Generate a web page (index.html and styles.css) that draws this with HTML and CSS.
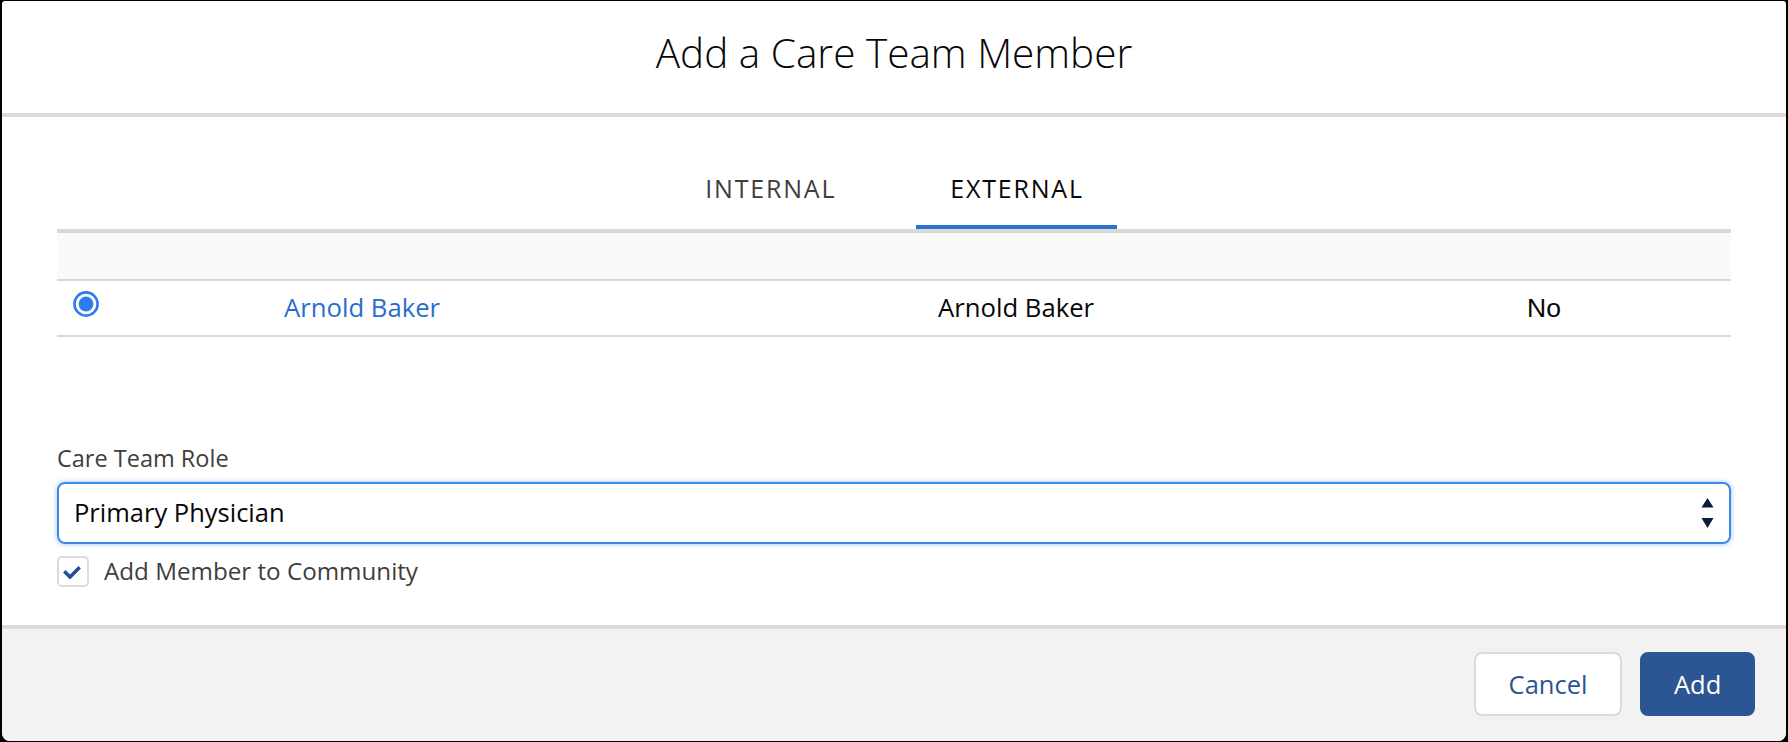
FILE: index.html
```html
<!DOCTYPE html>
<html lang="en">
<head>
<meta charset="utf-8">
<title>Add a Care Team Member</title>
<link rel="stylesheet" href="styles.css">
</head>
<body>
<div class="modal">
  <header class="modal-header">
    <h2 class="modal-title">Add a Care Team Member</h2>
  </header>
  <div class="modal-body">
    <nav class="tabs">
      <div class="tab">INTERNAL</div>
      <div class="tab tab-active">EXTERNAL</div>
    </nav>
    <div class="table">
      <div class="thead"></div>
      <div class="trow">
        <div class="cell cell-radio">
          <svg class="radio" width="26" height="26" viewBox="0 0 26 26">
            <circle cx="13" cy="13" r="11.6" fill="#fff" stroke="#2f7cf0" stroke-width="2.6"/>
            <circle cx="13" cy="13" r="7.4" fill="#2f7cf0"/>
          </svg>
        </div>
        <div class="cell"><a class="link">Arnold Baker</a></div>
        <div class="cell">Arnold Baker</div>
        <div class="cell cell-plain">No</div>
      </div>
    </div>
    <div class="field">
      <label class="field-label">Care Team Role</label>
      <div class="select">
        <span class="select-value">Primary Physician</span>
        <svg class="select-arrows" width="13" height="32" viewBox="0 0 13 32">
          <path d="M6.5 0 L12.5 9.5 L0.5 9.5 Z" fill="#0b1c3d"/>
          <path d="M0.5 20 L12.5 20 L6.5 30 Z" fill="#0b1c3d"/>
        </svg>
      </div>
      <div class="check-row">
        <span class="checkbox">
          <svg width="18" height="14" viewBox="0 0 18 14">
            <path d="M2.5 6.5 L7 11 L15.5 2.5" fill="none" stroke="#1c4f96" stroke-width="3.4" stroke-linecap="square"/>
          </svg>
        </span>
        <span class="check-label">Add Member to Community</span>
      </div>
    </div>
  </div>
  <footer class="modal-footer">
    <button class="btn btn-neutral">Cancel</button>
    <button class="btn btn-brand">Add</button>
  </footer>
</div>
</body>
</html>
```
FILE: styles.css
```css
* { box-sizing: border-box; }
html, body { margin: 0; padding: 0; }
body {
  background: #000;
  width: 1788px;
  height: 742px;
  padding: 1px 2px;
  font-family: "Open Sans", "Liberation Sans", sans-serif;
  color: #080707;
}
.modal {
  height: 740px;
  background: #fff;
  border-radius: 3px 3px 8px 8px;
  overflow: hidden;
  display: flex;
  flex-direction: column;
}
.modal-header {
  height: 116px;
  padding-top: 24px;
  border-bottom: 4px solid #dddbda;
  text-align: center;
}
.modal-title {
  margin: 0;
  font-size: 40.5px;
  line-height: 56px;
  font-weight: 300;
  letter-spacing: 0;
  color: #080707;
}
.modal-body {
  flex: 1;
  padding: 0 55px;
}
.tabs {
  display: flex;
  justify-content: center;
  gap: 47px;
}
.tab {
  padding: 51px 33px 17px 34px;
  line-height: 40px;
  font-size: 25px;
  letter-spacing: 1.8px;
  color: #3e3e3c;
  border-bottom: 4px solid transparent;
}
.tab-active {
  color: #080707;
  border-bottom-color: #2b73d3;
}
.table {
  border-top: 4px solid #d9d9d9;
}
.thead {
  height: 48px;
  background: #fafaf9;
  border-bottom: 2px solid #d9d9d9;
}
.trow {
  height: 56px;
  display: grid;
  grid-template-columns: 227px 654px 589px 1fr;
  align-items: center;
  border-bottom: 2px solid #d9d9d9;
  font-size: 25.7px;
}
.cell { line-height: 40px; }
.cell-radio {
  padding-left: 16px;
  display: flex;
  align-items: center;
  margin-top: -8px;
}
.link { color: #2a6ecb; text-decoration: none; }
.cell-plain {
  font-family: "Liberation Sans", Arial, sans-serif;
  font-size: 26.5px;
}
.field { padding-top: 105px; }
.field-label {
  display: block;
  font-size: 23.5px;
  line-height: 32px;
  color: #3e3e3c;
}
.select {
  margin-top: 8px;
  height: 62px;
  border: 2px solid #3b8ae8;
  border-radius: 8px;
  box-shadow: 0 0 5px rgba(21, 112, 230, 0.45);
  display: flex;
  align-items: center;
  justify-content: space-between;
  padding: 0 15px 0 15px;
}
.select-value {
  font-size: 25.5px;
  line-height: 40px;
  color: #080707;
  margin-top: -3px;
}
.select-arrows { display: block; margin-top: 2px; }
.check-row {
  margin-top: 11px;
  display: flex;
  align-items: center;
  gap: 15px;
}
.checkbox {
  width: 32px;
  height: 31px;
  border: 2px solid #dddbda;
  border-radius: 5px;
  background: #fff;
  display: flex;
  align-items: center;
  justify-content: center;
  padding: 3px 2px 0 0;
}
.checkbox svg { display: block; }
.check-label {
  font-size: 24.2px;
  line-height: 32px;
  color: #3e3e3c;
}
.modal-footer {
  height: 116px;
  background: #f3f2f2;
  border-top: 4px solid #dddbda;
  display: flex;
  justify-content: flex-end;
  align-items: center;
  gap: 18px;
  padding: 0 31px 0 0;
}
.btn {
  height: 64px;
  border-radius: 8px;
  font-family: "Open Sans", "Liberation Sans", sans-serif;
  font-size: 25.5px;
  border: 2px solid;
  padding: 0 32px;
  cursor: pointer;
  margin-top: -2px;
}
.btn-neutral {
  width: 148px;
  background: #fff;
  border-color: #dddbda;
  color: #2c5593;
}
.btn-brand {
  width: 115px;
  background: #2c5593;
  border-color: #2c5593;
  color: #fff;
}
```
